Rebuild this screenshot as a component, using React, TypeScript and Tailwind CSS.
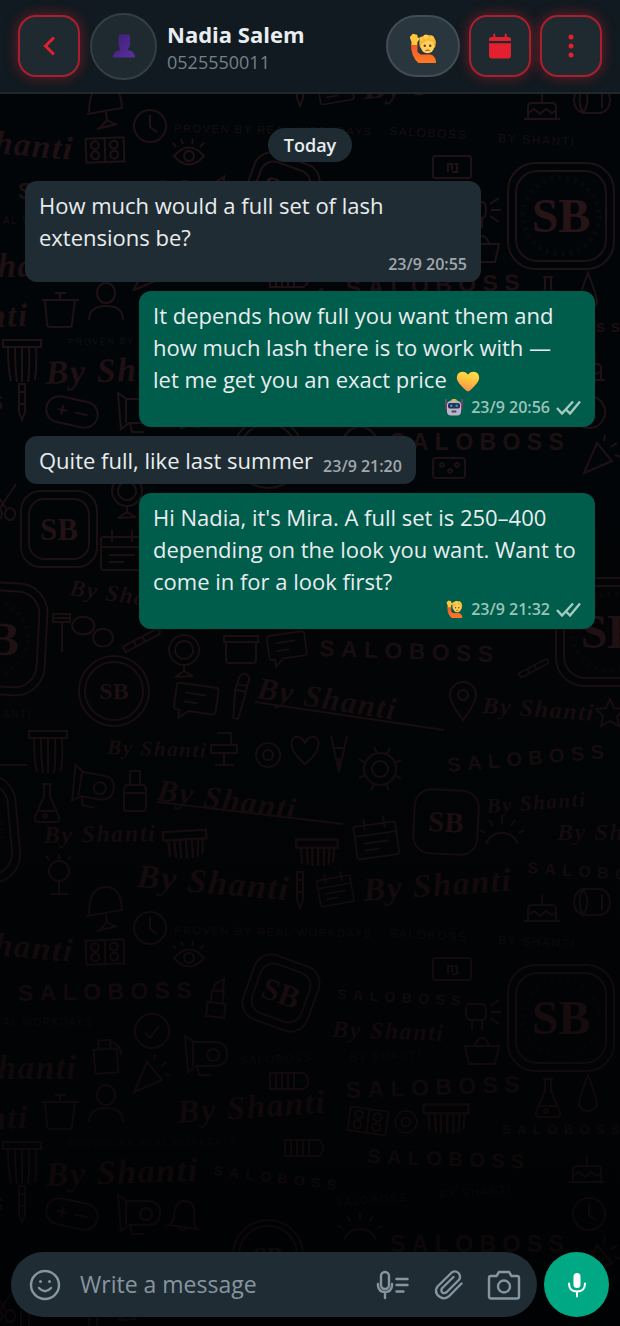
import React from "react";

type Place = { x: number; y: number; r?: number; s?: number };

const at = ({ x, y, r = 0, s = 1 }: Place) => `translate(${x} ${y}) rotate(${r}) scale(${s})`;

/* ---------- wallpaper ---------- */

type Word = Place & { size: number; text?: string };

const scripts: Word[] = [
  { x: 69, y: 595, r: 8, size: 23 },
  { x: 256, y: 698, r: 9, size: 31 },
  { x: 482, y: 713, r: 4, size: 24 },
  { x: 107, y: 754, r: 2, size: 21 },
  { x: 156, y: 800, r: 8, size: 31 },
  { x: 487, y: 813, r: -4, size: 21 },
  { x: 557, y: 840, r: 0, size: 24 },
  { x: 44, y: 843, r: -1, size: 24 },
  { x: 136, y: 887, r: 5, size: 34 },
  { x: 364, y: 901, r: -4, size: 33 },
  { x: -76, y: 949, r: 5, size: 33 },
  { x: 332, y: 1037, r: 2, size: 24 },
  { x: -72, y: 1079, r: 0, size: 33 },
  { x: 178, y: 1123, r: -4, size: 33 },
  { x: -120, y: 1133, r: -2, size: 33 },
  { x: 46, y: 1186, r: -2, size: 34 },
];

const marks: Word[] = [
  { x: 319, y: 656, r: 2, size: 23 },
  { x: 448, y: 772, r: -5, size: 20 },
  { x: 527, y: 873, r: 4, size: 16 },
  { x: 18, y: 1001, r: -1, size: 23 },
  { x: 337, y: 999, r: 3, size: 14 },
  { x: 346, y: 1098, r: -2, size: 23 },
  { x: 502, y: 1134, r: 0, size: 13 },
  { x: 213, y: 1175, r: 7, size: 14 },
  { x: 367, y: 1163, r: 2, size: 20 },
  { x: 390, y: 1252, r: 0, size: 23 },
  { x: -165, y: 1212, r: 0, size: 22 },
];

const whispers: Word[] = [
  { x: 174, y: 934, r: 1, size: 11, text: "PROVEN BY REAL WORKDAYS" },
  { x: 389, y: 937, r: 3, size: 12, text: "SALOBOSS" },
  { x: 498, y: 944, r: 3, size: 12, text: "BY SHANTI" },
  { x: 3, y: 1026, r: 0, size: 10, text: "AL WORKDAYS" },
  { x: 240, y: 1064, r: -2, size: 11, text: "SALOBOSS" },
  { x: 350, y: 1061, r: -2, size: 11, text: "BY SHANTI" },
  { x: 68, y: 1147, r: -1, size: 9, text: "PROVEN BY REAL WORKDAYS" },
  { x: 335, y: 1206, r: -4, size: 11, text: "SALOBOSS" },
  { x: 440, y: 1198, r: -4, size: 11, text: "BY SHANTI" },
  { x: 3, y: 718, r: 0, size: 10, text: "ANTI" },
];

const glyphs: Record<string, string> = {
  comb: "M-18-10h36v7h-36zM-14-3l1 14M-9-3l1 15M-4-3v16M1-3v16M6-3v16M11-3l-1 15M15-3l-1 13",
  brush: "M-19-20h38v7h-38zM-14-13q0 22 3 34M-7-13q0 22 2 35M0-13v35M7-13q1 20-1 35M14-13q1 18-1 33",
  clock: "M0-16a16 16 0 1 0 .1 0zM0-11V1l7 5",
  check: "M0-17a17 17 0 1 0 .1 0zM-7 1l5 6 9-12",
  target: "M0-12a12 12 0 1 0 .1 0zM0-5a5 5 0 1 0 .1 0z",
  eye: "M-15 0Q0-17 15 0 0 17-15 0zM0-5a5 5 0 1 0 .1 0zM-13-9l-3-4M-6-12l-2-5M3-12l1-5M11-9l4-4",
  palette: "M-19-12h38v24h-38zM0-12v24M-10-9a4 4 0 1 0 .1 0zM-10 1a4 4 0 1 0 .1 0zM9-9a4 4 0 1 0 .1 0zM9 1a4 4 0 1 0 .1 0z",
  lamp: "M-16 10Q-16-17 1-17 16-17 17 6l-35 6M1 10l1 8-8 9M2 18l9 5M-8 27l20-5",
  cake: "M-14 0q0-4 4-4h20q4 0 4 4v12h-28zM-18 12h36M0-4v-10M-14 6l6-4 6 5 6-5 6 4 4-3",
  barrel: "M-9-13H9Q18-10 18 0T9 13H-9Q-18 10-18 0T-9-13zM-9-13Q0 0-9 13M-9-13Q-16 0-9 13M10-8V8",
  mirror: "M0-16a15 15 0 1 0 .1 0zM0-10a9 9 0 1 0 .1 0zM0 14v6l-9 6M0 20l9 5M-9 26l18-1",
  calendar: "M-19-14h38q2 0 2 2v28q0 3-3 3h-36q-3 0-3-3v-28q0-2 2-2zM-21-4h42M-10-21v12M10-21v12M-13 4h26M-13 11h15",
  bubble: "M-18-15h36q3 0 3 3v21q0 3-3 3H-6l-9 8v-8h-3q-3 0-3-3v-21q0-3 3-3zM-12-6h22M-12 3h14",
  pin: "M0 19Q-13 2-13-6A13 13 0 0 1 13-6Q13 2 0 19zM0-11a5 5 0 1 0 .1 0z",
  star: "M0-14l4 9 10 1-7 7 2 10-9-5-9 5 2-10-7-7 10-1z",
  heart: "M0 14C-20-2-14-15-7-13-2-13 0-7 0-6 0-7 2-13 7-13 14-15 20-2 0 14z",
  tweezers: "M-8-18L0 18 8-18M-5-6h9M0 4v14",
  sun: "M0-16a16 16 0 1 0 .1 0zM0-8a8 8 0 1 0 .1 0zM-3-16l-3-6M7-15l3-6M15-6l6-3M15 6l6 4M6 15l3 6M-6 15l-3 6M-15 6l-6 3M-15-6l-6-4",
  sunrise: "M-16 8A17 17 0 0 1 16 8M-17-3l-5-3M-9-10l-4-6M0-12v-7M9-10l4-6M17-3l5-3",
  dryer: "M-21-18l3 36 8-6H8Q21 12 21 0T8-12h-20zM7-5a6 6 0 1 0 .1 0zM-9 12l2 9h12M-13-12V12",
  bottle: "M-5-20H5v14H-5zM-9-6H9q2 2 2 5v18q0 3-3 3H-8q-3 0-3-3V-1q0-3 2-5zM-11 2h22",
  flask: "M-5-19H5M-3-19v12L-12 14q-1 5 3 5H9q4 0 3-5L3-7v-12M-8 8h16M-2 11a2 2 0 1 0 .1 0z",
  chair: "M-8-18H6v12M-14-6h26v8h-26zM-1 2v12M-10 14H9M-14-6v8",
  jar: "M-17-14h34v6h-34zM-15-8v18q0 3 3 3h24q3 0 3-3V-8",
  tube: "M-5-20Q0-27 5-20L4-6 1 22h-5L-7-6zM-6-12H5M-6-6H4",
  pen: "M-3-18h6v28l-3 8-3-8zM-3-10h6M-3 2h6",
  card: "M-17-11h34q2 0 2 2V9q0 2-2 2h-34q-2 0-2-2V-9q0-2 2-2zM-4 5v-8h4v6M2-3h3v8h-5",
  lipstick: "M-9 4H9v14H-9zM-6-8H6V4H-6zM-4-8v-6l9-7v13",
  bag: "M-17-6h34l-4 18h-26zM-7-6q2-8 7-8t7 8",
  spray: "M-13-5H10v24h-23zM-8-5v-9H4v9M4-12q10 2 10 14",
  party: "M-16 18L-3-12 12 6zM4-14l1-6M11-8l6-4M15 0l6 2",
  battery: "M-19-8H14q5 2 5 8t-5 8h-33zM-13-8V8M-7-8V8M-1-8V8M5-8V8",
  pot: "M-18-10h37M-15-10l2 24q0 3 3 3H9q3 0 3-3l3-24M0-10v-7M-5-17h11",
  person: "M0-18a9 10 0 1 0 .1 0zM-17 19Q-17 5 0 5T17 19",
  drop: "M0-20Q-10 6-9 11 0 21 9 11 10 6 0-20z",
  pill: "M-13-13h26a13 13 0 0 1 0 26h-26a13 13 0 0 1 0-26zM-15 0h10M-10-5v10M3 0h13",
  bell: "M-14 11q5-3 4-12Q-10-15 0-15t10 14q0 9 5 12zM-4 11q4 7 8 0",
  razor: "M-8-18H9v8H-8zM-8-14H9M1-10V20",
  stones: "M-8-12a10 8 0 1 0 .1 0zM10-1a9 8 0 1 0 .1 0z",
  stick: "M-20-3h38q4 3 0 6h-38zM-8-3v6M2-3v6",
  dice: "M-13-10h26q3 0 3 3V7q0 3-3 3h-26q-3 0-3-3V-7q0-3 3-3zM-7-5a2 2 0 1 0 .1 0zM1 1a2 2 0 1 0 .1 0zM8-5a2 2 0 1 0 .1 0z",
  scissors: "M-12-14L4 8M14-16L-2 8M-6 8a6 6 0 1 0 .1 0zM8 8a5 6 0 1 0 .1 0z",
  tree: "M0-12a10 10 0 1 0 .1 0zM0 9v12M-8 21H9M-10-13l-3-4M0-14v-5M9-13l3-4",
  blow: "M-12-8H2q4 0 4 8t-4 8h-12q-4 0-4-8t2-8zM-8 8v10M2 8v10M10-6l9-6M11 0h10M10 6l9 6",
};

const icons: (Place & { g: string })[] = [
  { g: "mirror", x: 127, y: 492 }, { g: "calendar", x: 122, y: 551 }, { g: "scissors", x: 2, y: 500 },
  { g: "razor", x: 61, y: 632 }, { g: "stones", x: 92, y: 630, s: 1.1 }, { g: "stick", x: 142, y: 640, r: -28 },
  { g: "dice", x: 449, y: 468 }, { g: "party", x: 600, y: 455 }, { g: "stick", x: 534, y: 668, r: -28, s: 0.8 },
  { g: "mirror", x: 184, y: 651 }, { g: "jar", x: 241, y: 650 }, { g: "bubble", x: 287, y: 647, r: -8, s: 0.9 },
  { g: "bubble", x: 196, y: 700, r: 8 }, { g: "tube", x: 241, y: 697, r: 10 }, { g: "pin", x: 463, y: 701 },
  { g: "star", x: 610, y: 713 }, { g: "brush", x: 48, y: 751 }, { g: "chair", x: 225, y: 751 },
  { g: "target", x: 268, y: 755 }, { g: "heart", x: 305, y: 750 }, { g: "tweezers", x: 339, y: 754 },
  { g: "sun", x: 380, y: 769 }, { g: "dryer", x: 93, y: 786, r: 10 }, { g: "bottle", x: 135, y: 791 },
  { g: "flask", x: 47, y: 803 }, { g: "calendar", x: 376, y: 838, r: -8 }, { g: "sunrise", x: 502, y: 836 },
  { g: "comb", x: 185, y: 843, r: -3, s: 1.2 }, { g: "comb", x: 317, y: 851, s: 1.15 }, { g: "tree", x: 59, y: 873 },
  { g: "pen", x: 300, y: 890 }, { g: "calendar", x: 335, y: 889, r: -10, s: 0.8 }, { g: "lamp", x: 105, y: 904 },
  { g: "clock", x: 150, y: 928 }, { g: "palette", x: 105, y: 952, r: -2 }, { g: "eye", x: 189, y: 958 },
  { g: "cake", x: 542, y: 909 }, { g: "barrel", x: 592, y: 902 }, { g: "lipstick", x: 217, y: 999, r: 6 },
  { g: "card", x: 452, y: 969 }, { g: "blow", x: 480, y: 1012 }, { g: "check", x: 152, y: 1031 },
  { g: "bag", x: 482, y: 1052 }, { g: "spray", x: 107, y: 1054, r: -4 }, { g: "dryer", x: 206, y: 1054 },
  { g: "party", x: 150, y: 1074 }, { g: "battery", x: 289, y: 1081 }, { g: "palette", x: 368, y: 1121, r: 8 },
  { g: "target", x: 406, y: 1122, s: 0.9 }, { g: "comb", x: 446, y: 1117, s: 1.25 }, { g: "flask", x: 548, y: 1098 },
  { g: "drop", x: 588, y: 1095 }, { g: "pot", x: 60, y: 1112 }, { g: "person", x: 106, y: 1103 },
  { g: "brush", x: 22, y: 1162 }, { g: "battery", x: 304, y: 1148 }, { g: "pen", x: 22, y: 1204 },
  { g: "pill", x: 72, y: 1214, r: 12 }, { g: "dryer", x: 139, y: 1213 }, { g: "bell", x: 184, y: 1216, r: 8 },
  { g: "cake", x: 587, y: 1170 }, { g: "sunrise", x: 360, y: 1232 }, { g: "clock", x: 589, y: 1214 },
];

const badges: (Place & { size: number; font: number; rings: number })[] = [
  { x: 59, y: 529, size: 76, font: 31, rings: 2 },
  { x: 446, y: 822, r: 3, size: 64, font: 29, rings: 1 },
  { x: 281, y: 993, r: 20, size: 68, font: 31, rings: 2 },
  { x: 561, y: 1018, size: 106, font: 48, rings: 2 },
  { x: -10, y: 638, r: 3, size: 112, font: 48, rings: 2 },
  { x: 610, y: 632, r: 0, size: 108, font: 48, rings: 2 },
  { x: -36, y: 831, r: -5, size: 108, font: 48, rings: 2 },
];

const seals = [
  { x: 114, y: 691 },
  { x: 268, y: 1255 },
];

/* Draws the motifs once, moved by `shift`; only words that end up between `from` and `to` are kept. */
function Tile({ shift, from, to }: { shift: number; from: number; to: number }) {
  const shown = (p: Place) => p.y + shift > from && p.y + shift < to;
  const initials = "fill-[#261417] stroke-none font-['Liberation_Serif',serif] font-bold";
  return (
    <g transform={`translate(0 ${shift})`}>
      {icons.map((p, i) => (
        <path key={i} d={glyphs[p.g]} transform={at(p)} />
      ))}
      <path d="M255 702L444 730M157 802L343 824M0 765H27" />
      {badges.map((b, i) => {
        const h = b.size / 2;
        const inner = h - 8;
        return (
          <g key={i} transform={at(b)}>
            <rect x={-h} y={-h} width={b.size} height={b.size} rx={b.size * 0.26} />
            {b.rings > 1 && <rect x={-inner} y={-inner} width={inner * 2} height={inner * 2} rx={b.size * 0.2} />}
            {b.size > 100 && <circle r="38" strokeDasharray="3 5" strokeWidth="5" strokeOpacity="0.3" />}
            {shown(b) && b.x > -30 && (
              <text y={b.font * 0.34} fontSize={b.font} textAnchor="middle" className={initials}>SB</text>
            )}
          </g>
        );
      })}
      {seals.map((p, i) => (
        <g key={i} transform={at(p)}>
          <circle r="35" />
          <circle r="29" />
          {shown(p) && shift === 0 && (
            <text y="8" fontSize="24" textAnchor="middle" className={initials}>SB</text>
          )}
        </g>
      ))}
      <g className="fill-[#1e1013] stroke-none font-['Liberation_Serif',serif] font-bold tracking-widest italic">
        {scripts.filter(shown).map((w, i) => (
          <text key={i} transform={at(w)} fontSize={w.size}>By Shanti</text>
        ))}
      </g>
      <g className="fill-[#1d1013] stroke-none font-['Liberation_Sans',sans-serif] font-bold tracking-[0.4em]">
        {marks.filter(shown).map((w, i) => (
          <text key={i} transform={at(w)} fontSize={w.size}>SALOBOSS</text>
        ))}
      </g>
      <g className="fill-[#170e11] stroke-none font-['Liberation_Sans',sans-serif] tracking-widest">
        {whispers.filter(shown).map((w, i) => (
          <text key={i} transform={at(w)} fontSize={w.size}>{w.text}</text>
        ))}
      </g>
    </g>
  );
}

function Wallpaper() {
  return (
    <div aria-hidden="true" className="absolute inset-0 -z-10 overflow-hidden bg-[#020507]">
      <svg className="h-full w-full fill-none stroke-[#1f1114] stroke-2">
        <Tile shift={-802} from={94} to={452} />
        <Tile shift={0} from={452} to={1256} />
        <Tile shift={802} from={1256} to={1300} />
      </svg>
      <div className="absolute inset-0 bg-linear-to-b from-black/0 from-30% via-black/30 via-60% to-black/60" />
    </div>
  );
}

/* ---------- emoji ---------- */

function HandRaised({ className }: { className: string }) {
  return (
    <svg viewBox="0 0 28 30" className={className} role="img" aria-label="Person raising hand">
      <defs>
        <linearGradient id="shirt" x1="0" y1="0" x2="0" y2="1">
          <stop offset="0" stopColor="#f2542f" />
          <stop offset="1" stopColor="#ff7a21" />
        </linearGradient>
      </defs>
      <path d="M2 11.500h6.500v7.500l3 2.500h10q5.500 1.500 5.500 8.500H9.500Q2 24 2 11.500z" fill="url(#shirt)" />
      <path d="M1 5q-.5-2 1-2L3 1.500Q4.500 0 5.500 1.200L7.500 1.500Q9 2 8.800 5l1.700-.5q.8.800-.5 2.200L8.300 9.500v2.500H2.500V9z" fill="#ffc83d" />
      <path d="M10.500 9Q10 2.500 18 2.500T26.500 9q.5 4-1 6H11.500q-1.500-2-1-6z" fill="#f0a52a" />
      <ellipse cx="18.500" cy="13" rx="6.800" ry="7.300" fill="#ffd05a" />
      <path d="M10.500 11Q10 2 18.500 2T27 11q-2-1-3-3-4 .5-6-1-2 3-7.500 4z" fill="#f7b733" />
      <circle cx="12.500" cy="6" r="2.200" fill="#fcc243" />
      <circle cx="17" cy="3.800" r="2.300" fill="#ffd057" />
      <circle cx="22.500" cy="4.800" r="2.300" fill="#fcc445" />
      <circle cx="15.800" cy="12.800" r="1.200" fill="#5c3a2a" />
      <circle cx="21.200" cy="12.800" r="1.200" fill="#5c3a2a" />
      <path d="M17 17.500q1.500-1 3 0" fill="none" stroke="#a8462c" strokeWidth="1.200" strokeLinecap="round" />
    </svg>
  );
}

function Robot({ className }: { className: string }) {
  return (
    <svg viewBox="0 0 18 18" className={className} role="img" aria-label="Robot">
      <path d="M5 3.500Q5.500 1 9 1t4 2.500z" fill="#8bc34a" />
      <path d="M7.500 1h3v2h-3z" fill="#f7b731" />
      <path d="M1 1v6M17 1v6" stroke="#a5446b" strokeWidth="1.200" />
      <rect x="0.500" y="6" width="2" height="6" rx="1" fill="#8a3d68" />
      <rect x="15.500" y="6" width="2" height="6" rx="1" fill="#8a3d68" />
      <rect x="2" y="3" width="14" height="14.500" rx="4" fill="#b9b3cb" />
      <rect x="3" y="5" width="12" height="5.500" rx="2" fill="#25304f" />
      <circle cx="6.300" cy="7.700" r="1.300" fill="#3b8ad5" />
      <circle cx="11.700" cy="7.700" r="1.300" fill="#3b8ad5" />
      <rect x="6.500" y="12.500" width="5" height="2" rx="1" fill="#4a4560" />
    </svg>
  );
}

function YellowHeart() {
  return (
    <svg viewBox="0 0 24 22" className="mx-1 inline-block h-[21px] w-6 align-[-4px]" role="img" aria-label="Yellow heart">
      <defs>
        <linearGradient id="gold" x1="0.700" y1="0" x2="0.400" y2="1">
          <stop offset="0" stopColor="#ffe04a" />
          <stop offset="0.500" stopColor="#fdbd3c" />
          <stop offset="1" stopColor="#f58e52" />
        </linearGradient>
      </defs>
      <path d="M12 21.500Q9 20.500 4 14.500 0 10 .3 6.500.8 1 6 .7 10 .6 12 4 14 .6 18 .7q5.200.3 5.700 5.800.3 3.500-3.700 8-5 6-8 7z" fill="url(#gold)" />
    </svg>
  );
}

function Bust() {
  return (
    <svg viewBox="0 0 22 24" className="h-6 w-[22px]" role="img" aria-label="Contact photo">
      <defs>
        <linearGradient id="plum" x1="0" y1="0" x2="1" y2="1">
          <stop offset="0" stopColor="#3d1f74" />
          <stop offset="1" stopColor="#5b2fa0" />
        </linearGradient>
      </defs>
      <path d="M5.500 2Q5.500.500 8 .5h6q3 0 3 2v7q0 3.500-2 5v1.500q6.500.8 7 7.500H0q.5-6.700 7-7.500V14.500q-1.500-2-1.500-5z" fill="url(#plum)" />
    </svg>
  );
}

/* ---------- line icons ---------- */

function Ticks() {
  return (
    <svg viewBox="0 0 25 15" className="h-[15px] w-[25px] fill-none stroke-[#a5cbc0] stroke-[2.400]" role="img" aria-label="Delivered">
      <path d="M1 8l5 5.500L17 1.500M10.500 10l3.500 3.500L24 1.500" />
    </svg>
  );
}

/* ---------- messages ---------- */

function Meta({ time, children, sent }: { time: string; children?: React.ReactNode; sent?: boolean }) {
  return (
    <span className={`flex items-center justify-end text-base font-semibold ${sent ? "h-6 text-[#99c4b7]" : "h-[21px] text-[#a0a8ad]"}`}>
      {children}
      <time>{time}</time>
      {sent && <span className="ml-1.5"><Ticks /></span>}
    </span>
  );
}

const bubble = "max-w-[80%] rounded-xl px-3.5 py-2 text-[22px] leading-8 text-[#e9edef]";

export default function App() {
  const glowButton =
    "flex size-[62px] shrink-0 items-center justify-center rounded-[18px] border-2 border-[#a8202f] bg-[#1f2a30] text-[#e3202f] shadow-[0_0_14px_rgba(227,32,47,0.45)]";
  return (
    <div className="relative isolate flex min-h-screen flex-col font-['Open_Sans','Noto_Sans',sans-serif]">
      <Wallpaper />

      <header className="flex h-[94px] items-center border-b-2 border-[#20282c] bg-[#101a20] px-[18px]">
        <button type="button" aria-label="Back" className={glowButton}>
          <svg viewBox="0 0 12 20" className="h-5 w-3 fill-none stroke-current stroke-3">
            <path d="M11 1.500L2.500 10l8.500 8.500" />
          </svg>
        </button>
        <div className="ml-2.5 flex size-[67px] shrink-0 items-center justify-center rounded-full border-2 border-[#343f45] bg-[#1f2a30]">
          <Bust />
        </div>
        <div className="ml-2.5 min-w-0 flex-1 pt-1">
          <h1 className="truncate text-[22px] leading-7 font-bold text-[#e9edef]">Nadia Salem</h1>
          <p className="text-lg leading-7 text-[#73818a]">0525550011</p>
        </div>
        <div className="flex items-center gap-[9px]">
          <button type="button" aria-label="Handled by a person" className="flex h-[62px] w-[74px] items-center justify-center rounded-full border-2 border-[#424c54] bg-[#2a363e]">
            <HandRaised className="mt-1 h-[30px] w-7" />
          </button>
          <button type="button" aria-label="Calendar" className={glowButton}>
            <svg viewBox="0 0 24 26" className="h-[26px] w-6 fill-current">
              <path d="M1 8V6.500Q1 4 3.500 4h1.800V2q0-1.500 1-1.500t1 1.500v2h9.400V2q0-1.500 1-1.500t1 1.500v2h1.800Q23 4 23 6.500V8zM1 10.200h22V22.500Q23 25.500 20 25.500H4q-3 0-3-3z" />
            </svg>
          </button>
          <button type="button" aria-label="More options" className={glowButton}>
            <svg viewBox="0 0 6 24" className="h-6 w-1.5 fill-current">
              <circle cx="3" cy="3" r="2.500" />
              <circle cx="3" cy="12" r="2.500" />
              <circle cx="3" cy="21" r="2.500" />
            </svg>
          </button>
        </div>
      </header>

      <main className="flex flex-1 flex-col gap-[9px] px-[25px] pt-[34px]">
        <div className="mb-2.5 self-center rounded-full bg-[#1f2b32] px-4 text-lg leading-[34px] font-semibold text-[#e9edef]">Today</div>

        <article className={`${bubble} self-start bg-[#202c33]`}>
          <p>How much would a full set of lash extensions be?</p>
          <Meta time="23/9 20:55" />
        </article>

        <article className={`${bubble} self-end bg-[#005c4b]`}>
          <p>
            It depends how full you want them and how much lash there is to work with — let me get you an exact price <YellowHeart />
          </p>
          <Meta time="23/9 20:56" sent>
            <Robot className="mr-2 size-[18px]" />
          </Meta>
        </article>

        <article className={`${bubble} flex items-end gap-2.5 self-start bg-[#202c33]`}>
          <p>Quite full, like last summer</p>
          <Meta time="23/9 21:20" />
        </article>

        <article className={`${bubble} self-end bg-[#005c4b]`}>
          <p>Hi Nadia, it's Mira. A full set is 250–400 depending on the look you want. Want to come in for a look first?</p>
          <Meta time="23/9 21:32" sent>
            <HandRaised className="mr-2 h-[18px] w-[17px]" />
          </Meta>
        </article>
      </main>

      <footer className="flex items-center gap-[7px] px-[11px] pb-[9px]">
        <form className="flex h-[65px] min-w-0 flex-1 items-center rounded-full bg-[#202c33] pr-4 pl-[18px] text-[#8696a0]" onSubmit={(e) => e.preventDefault()}>
          <button type="button" aria-label="Emoji" className="shrink-0">
            <svg viewBox="0 0 32 32" className="size-8 fill-none stroke-current stroke-[2.400]">
              <circle cx="16" cy="16" r="14" />
              <circle cx="11.500" cy="12.500" r="1.500" className="fill-current stroke-none" />
              <circle cx="20.500" cy="12.500" r="1.500" className="fill-current stroke-none" />
              <path d="M10 19q6 6.500 12 0" strokeLinecap="round" />
            </svg>
          </button>
          <input
            type="text"
            aria-label="Message"
            placeholder="Write a message"
            className="ml-[19px] min-w-0 flex-1 bg-transparent text-[23px] text-[#e9edef] outline-none placeholder:text-[#8696a0]"
          />
          <button type="button" aria-label="Dictate" className="shrink-0">
            <svg viewBox="0 0 34 30" className="h-[30px] w-[34px] fill-none stroke-current stroke-[2.400]" strokeLinecap="round">
              <rect x="5" y="2" width="8" height="17" rx="4" />
              <path d="M2 14v2q1 6 7 6t7-6v-2M9 22v6M20.500 9h11M20.500 15h11M20.500 21.500h7" />
            </svg>
          </button>
          <button type="button" aria-label="Attach" className="ml-6 shrink-0">
            <svg viewBox="0 0 30 32" className="h-8 w-[30px] fill-none stroke-current stroke-[2.300]" strokeLinecap="round" strokeLinejoin="round">
              <path d="M27.500 14.500L15 27.200Q11 31 6 28-.5 23.500 3.500 17.500L17.500 3.700Q21 1 24.500 4 27.500 7.500 24.800 11L12.500 23.300Q10 25 8.200 23.300 6.500 21.500 8.300 19L19.500 8" />
            </svg>
          </button>
          <button type="button" aria-label="Camera" className="ml-[23px] shrink-0">
            <svg viewBox="0 0 34 30" className="h-[30px] w-[34px] fill-none stroke-current stroke-[2.400]" strokeLinejoin="round">
              <path d="M4 6h5.500l2.500-4h10l2.500 4H30q2 0 2 2v18.500q0 2-2 2H4q-2 0-2-2V8q0-2 2-2z" />
              <circle cx="17" cy="16.500" r="6" />
            </svg>
          </button>
        </form>
        <button type="button" aria-label="Record voice message" className="flex size-[65px] shrink-0 items-center justify-center rounded-full bg-[#00a884] text-white">
          <svg viewBox="0 0 20 26" className="h-[26px] w-5 fill-none stroke-current stroke-2" strokeLinecap="round">
            <rect x="6.500" y="1" width="7" height="15" rx="3.500" className="fill-current stroke-none" />
            <path d="M2 11.500q0 8 8 8t8-8M10 19.500V24.500" />
          </svg>
        </button>
      </footer>
    </div>
  );
}
